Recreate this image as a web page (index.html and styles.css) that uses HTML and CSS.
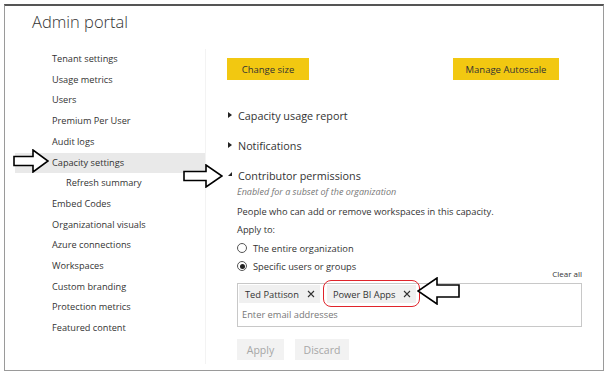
FILE: index.html
```
<!DOCTYPE html>
<html lang="en">

<head>
    <meta charset="utf-8">
    <title>Admin portal</title>
    <link rel="stylesheet" href="styles.css">
</head>

<body>
    <div class="frame">
        <h1>Admin portal</h1>

        <div class="layout">
            <nav class="sidenav">
                <a>Tenant settings</a>
                <a>Usage metrics</a>
                <a>Users</a>
                <a>Premium Per User</a>
                <a>Audit logs</a>
                <a class="valgt">Capacity settings</a>
                <a class="sub">Refresh summary</a>
                <a>Embed Codes</a>
                <a>Organizational visuals</a>
                <a>Azure connections</a>
                <a>Workspaces</a>
                <a>Custom branding</a>
                <a>Protection metrics</a>
                <a>Featured content</a>
            </nav>

            <main class="content">
                <div class="topknapper">
                    <button class="gul">Change size</button>
                    <button class="gul">Manage Autoscale</button>
                </div>

                <div class="sektion"><span class="pil"></span>Capacity usage report</div>
                <div class="sektion"><span class="pil"></span>Notifications</div>
                <div class="sektion"><span class="pil aaben"></span>Contributor permissions</div>

                <div class="detaljer">
                    <p class="undertekst">Enabled for a subset of the organization</p>
                    <p class="tekst">People who can add or remove workspaces in this capacity.</p>
                    <p class="tekst">Apply to:</p>
                    <label class="radio"><span class="cirkel"></span>The entire organization</label>
                    <label class="radio"><span class="cirkel valgt"></span>Specific users or groups</label>
                    <div class="ryd"><span>Clear all</span></div>
                    <div class="input">
                        <div class="chips">
                            <span class="chip">Ted Pattison <svg class="kryds" width="8" height="8" viewBox="0 0 8 8"><path d="M1 1L7 7M7 1L1 7" stroke="#333" stroke-width="1.1"/></svg></span>
                            <span class="chip markeret">Power BI Apps <svg class="kryds" width="8" height="8" viewBox="0 0 8 8"><path d="M1 1L7 7M7 1L1 7" stroke="#333" stroke-width="1.1"/></svg></span>
                        </div>
                        <div class="placeholder">Enter email addresses</div>
                    </div>
                    <div class="handlinger">
                        <button class="graa">Apply</button>
                        <button class="graa">Discard</button>
                    </div>
                </div>
            </main>
        </div>

        <!-- annotation arrows -->
        <svg class="pil-1" width="36" height="24" viewBox="0 0 36 24">
            <polygon points="1,7.5 20,7.5 20,1 35,12 20,23 20,16.5 1,16.5" fill="#fff" stroke="#000" stroke-width="1.6"/>
        </svg>
        <svg class="pil-2" width="40" height="24" viewBox="0 0 40 24">
            <polygon points="1,7.5 23,7.5 23,1 39,12 23,23 23,16.5 1,16.5" fill="#fff" stroke="#000" stroke-width="1.6"/>
        </svg>
        <svg class="pil-3" width="43" height="28" viewBox="0 0 43 28">
            <polygon points="42,8 20,8 20,1 1,14 20,27 20,20 42,20" fill="#fff" stroke="#000" stroke-width="1.6"/>
        </svg>
    </div>
</body>

</html>
```

FILE: styles.css
```
body {
    margin: 0;
    background-color: white;
    font-family: "Open Sans", "Noto Sans", sans-serif;
    color: #333;
}

.frame {
    position: relative;
    margin: 4px;
    width: 598px;
    height: 364px;
    border: 1px solid #9a9a9a;
    border-top: 2px solid #555;
}

h1 {
    margin: 4px 0 0 27px;
    font-size: 16.5px;
    line-height: 24px;
    font-weight: 300;
    color: #333;
}

.layout {
    display: flex;
    margin-top: 15px;
    height: 315px;
}

.sidenav {
    display: flex;
    flex-direction: column;
    width: 190px;
    margin-left: 10px;
    border-right: 1px solid #f3f3f3;
}

.sidenav a {
    display: block;
    padding-left: 37px;
    font-size: 9.2px;
    line-height: 20.7px;
    color: #333;
}

.sidenav a.sub {
    padding-left: 51px;
}

.sidenav a.valgt {
    background-color: #e9e9e9;
}

.content {
    flex: 1;
    padding: 9px 21px 0 21px;
}

.topknapper {
    display: flex;
    justify-content: space-between;
    margin: 0 23px 25px 0;
}

button {
    border: none;
    font-family: inherit;
    font-size: 9.5px;
    height: 22px;
    padding: 0;
}

.gul {
    background-color: #f2c811;
    color: #333;
    width: 82px;
}

.gul + .gul {
    width: 106px;
}

.sektion {
    display: flex;
    align-items: center;
    height: 20px;
    margin-bottom: 10px;
    font-size: 10.8px;
    color: #333;
}

.sektion:nth-of-type(4) {
    margin-bottom: 0;
}

.pil {
    width: 0;
    height: 0;
    margin: 0 6px 0 1px;
    border-top: 3.5px solid transparent;
    border-bottom: 3.5px solid transparent;
    border-left: 4px solid #222;
}

.pil.aaben {
    border-top: 0;
    border-left: 4px solid transparent;
    border-bottom: 4px solid #222;
    margin-top: -2px;
}

.detaljer {
    padding-left: 10px;
}

.undertekst {
    margin: 0;
    font-size: 9px;
    font-style: italic;
    color: #777;
    line-height: 14px;
}

.tekst {
    margin: 0;
    font-size: 9.3px;
    line-height: 18px;
}

.undertekst + .tekst {
    margin-top: 4px;
}

.radio {
    display: flex;
    align-items: center;
    height: 18px;
    font-size: 9.3px;
}

.cirkel {
    box-sizing: border-box;
    width: 10px;
    height: 10px;
    margin-right: 6px;
    border: 1px solid #555;
    border-radius: 50%;
    display: flex;
    align-items: center;
    justify-content: center;
}

.cirkel.valgt::after {
    content: "";
    width: 5px;
    height: 5px;
    border-radius: 50%;
    background-color: #222;
}

.ryd {
    display: flex;
    justify-content: flex-end;
    font-size: 8px;
    line-height: 10px;
    margin-top: -6px;
}

.input {
    margin-top: 4px;
    height: 44px;
    box-sizing: border-box;
    border: 1px solid #c8c8c8;
    padding: 1px 0 0 1px;
}

.chips {
    display: flex;
    gap: 7px;
}

.chip {
    position: relative;
    display: flex;
    align-items: center;
    height: 18px;
    padding: 0 5px 0 6px;
    background-color: #f0f0f0;
    font-size: 9.3px;
}

.kryds {
    margin-left: 8px;
}

.chip.markeret::after {
    content: "";
    position: absolute;
    top: -5px;
    left: -4px;
    right: -4px;
    bottom: -4px;
    border: 1.3px solid #e0242b;
    border-radius: 8px;
}

.placeholder {
    margin: 5px 0 0 3px;
    font-size: 9.3px;
    color: #777;
}

.handlinger {
    display: flex;
    gap: 11px;
    margin-top: 12px;
}

.graa {
    background-color: #f2f2f2;
    color: #a6a6a6;
    font-size: 10.5px;
    height: 21px;
    width: 47px;
}

.graa + .graa {
    width: 54px;
}

.pil-1,
.pil-2,
.pil-3 {
    position: absolute;
}

.pil-1 {
    left: 8px;
    top: 143px;
}

.pil-2 {
    left: 178px;
    top: 158px;
}

.pil-3 {
    left: 412px;
    top: 271px;
}
```
